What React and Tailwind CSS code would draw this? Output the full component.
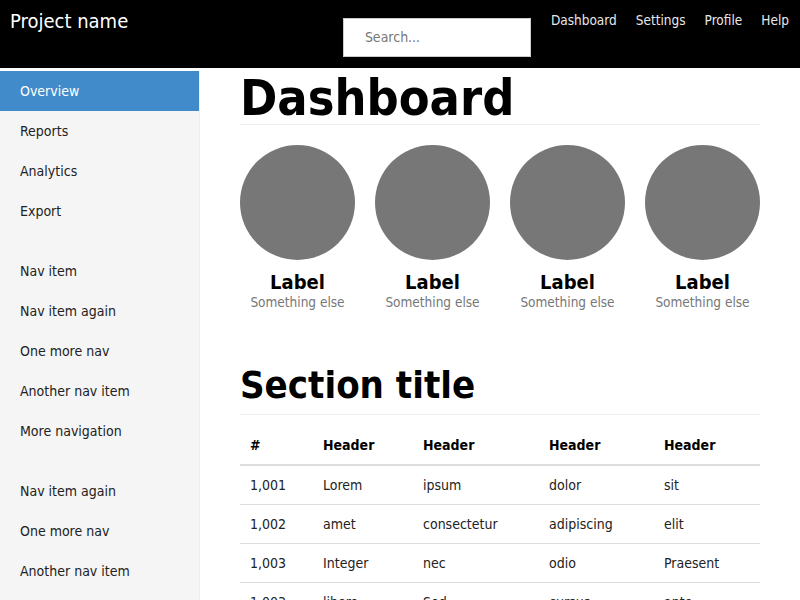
import React from "react";

const font = { fontFamily: '"DejaVu Sans Condensed", "DejaVu Sans", Verdana, sans-serif' };

const groups = [
  ["Overview", "Reports", "Analytics", "Export"],
  ["Nav item", "Nav item again", "One more nav", "Another nav item", "More navigation"],
  ["Nav item again", "One more nav", "Another nav item"],
];

const rows = [
  ["1,001", "Lorem", "ipsum", "dolor", "sit"],
  ["1,002", "amet", "consectetur", "adipiscing", "elit"],
  ["1,003", "Integer", "nec", "odio", "Praesent"],
  ["1,003", "libero", "Sed", "cursus", "ante"],
  ["1,004", "dapibus", "diam", "Sed", "nisi"],
];

const colW = ["w-[73px]", "w-[100px]", "w-[126px]", "w-[115px]", "flex-1"];

export default function App() {
  return (
    <div className="w-[800px] h-[600px] overflow-hidden bg-white text-[#222]" style={font}>
      <div className="h-[68px] bg-black flex items-start">
        <div className="ml-[10px] mt-[9px] text-[20px] leading-[24px] text-white">Project name</div>
        <div className="flex-1" />
        <div className="mt-[18px] w-[188px] h-[39px] bg-white border border-[#ccc] flex items-center pl-[21px] text-[14px] text-[#777]">
          Search...
        </div>
        <div className="ml-[20px] mr-[11px] mt-[10px] flex gap-[19px] text-[13.5px] leading-[20px] text-[#e8e8e8]">
          <span>Dashboard</span>
          <span>Settings</span>
          <span>Profile</span>
          <span>Help</span>
        </div>
      </div>
      <div className="flex pt-[3px]">
        <div className="w-[200px] shrink-0 h-[600px] bg-[#f5f5f5] border-r border-[#eee]">
          {groups.map((g, gi) => (
            <div key={gi} className={gi > 0 ? "mt-[20px]" : ""}>
              {g.map((item, i) => (
                <div
                  key={i}
                  className={
                    "h-[40px] flex items-center pl-[20px] text-[14px] " +
                    (gi === 0 && i === 0 ? "bg-[#428bca] text-white" : "text-[#222]")
                  }
                >
                  {item}
                </div>
              ))}
            </div>
          ))}
        </div>
        <div className="flex-1 pl-[40px] pr-[40px]">
          <h1 className="mt-[1px] h-[53px] border-b border-[#eee] text-[50px] leading-[52px] font-bold text-black">
            Dashboard
          </h1>
          <div className="mt-[20px] flex gap-[20px]">
            {[0, 1, 2, 3].map((i) => (
              <div key={i} className="w-[115px] flex flex-col items-center">
                <div className="w-[115px] h-[115px] rounded-full bg-[#777]" />
                <div className="mt-[10px] text-[20px] leading-[24px] font-bold text-black">Label</div>
                <div className="text-[13.5px] leading-[16px] text-[#777] whitespace-nowrap">Something else</div>
              </div>
            ))}
          </div>
          <h2 className="mt-[55px] pb-[9px] border-b border-[#eee] text-[38px] leading-[40px] font-bold text-black">
            Section title
          </h2>
          <div className="mt-[10px] text-[14px]">
            <div className="flex h-[41px] pt-[2px] items-center border-b-2 border-[#ddd] font-bold text-black">
              {["#", "Header", "Header", "Header", "Header"].map((h, i) => (
                <div key={i} className={colW[i] + " pl-[10px]"}>{h}</div>
              ))}
            </div>
            {rows.map((r, ri) => (
              <div key={ri} className="flex h-[39px] items-center border-b border-[#ddd]">
                {r.map((c, i) => (
                  <div key={i} className={colW[i] + " pl-[10px]"}>{c}</div>
                ))}
              </div>
            ))}
          </div>
        </div>
      </div>
    </div>
  );
}
